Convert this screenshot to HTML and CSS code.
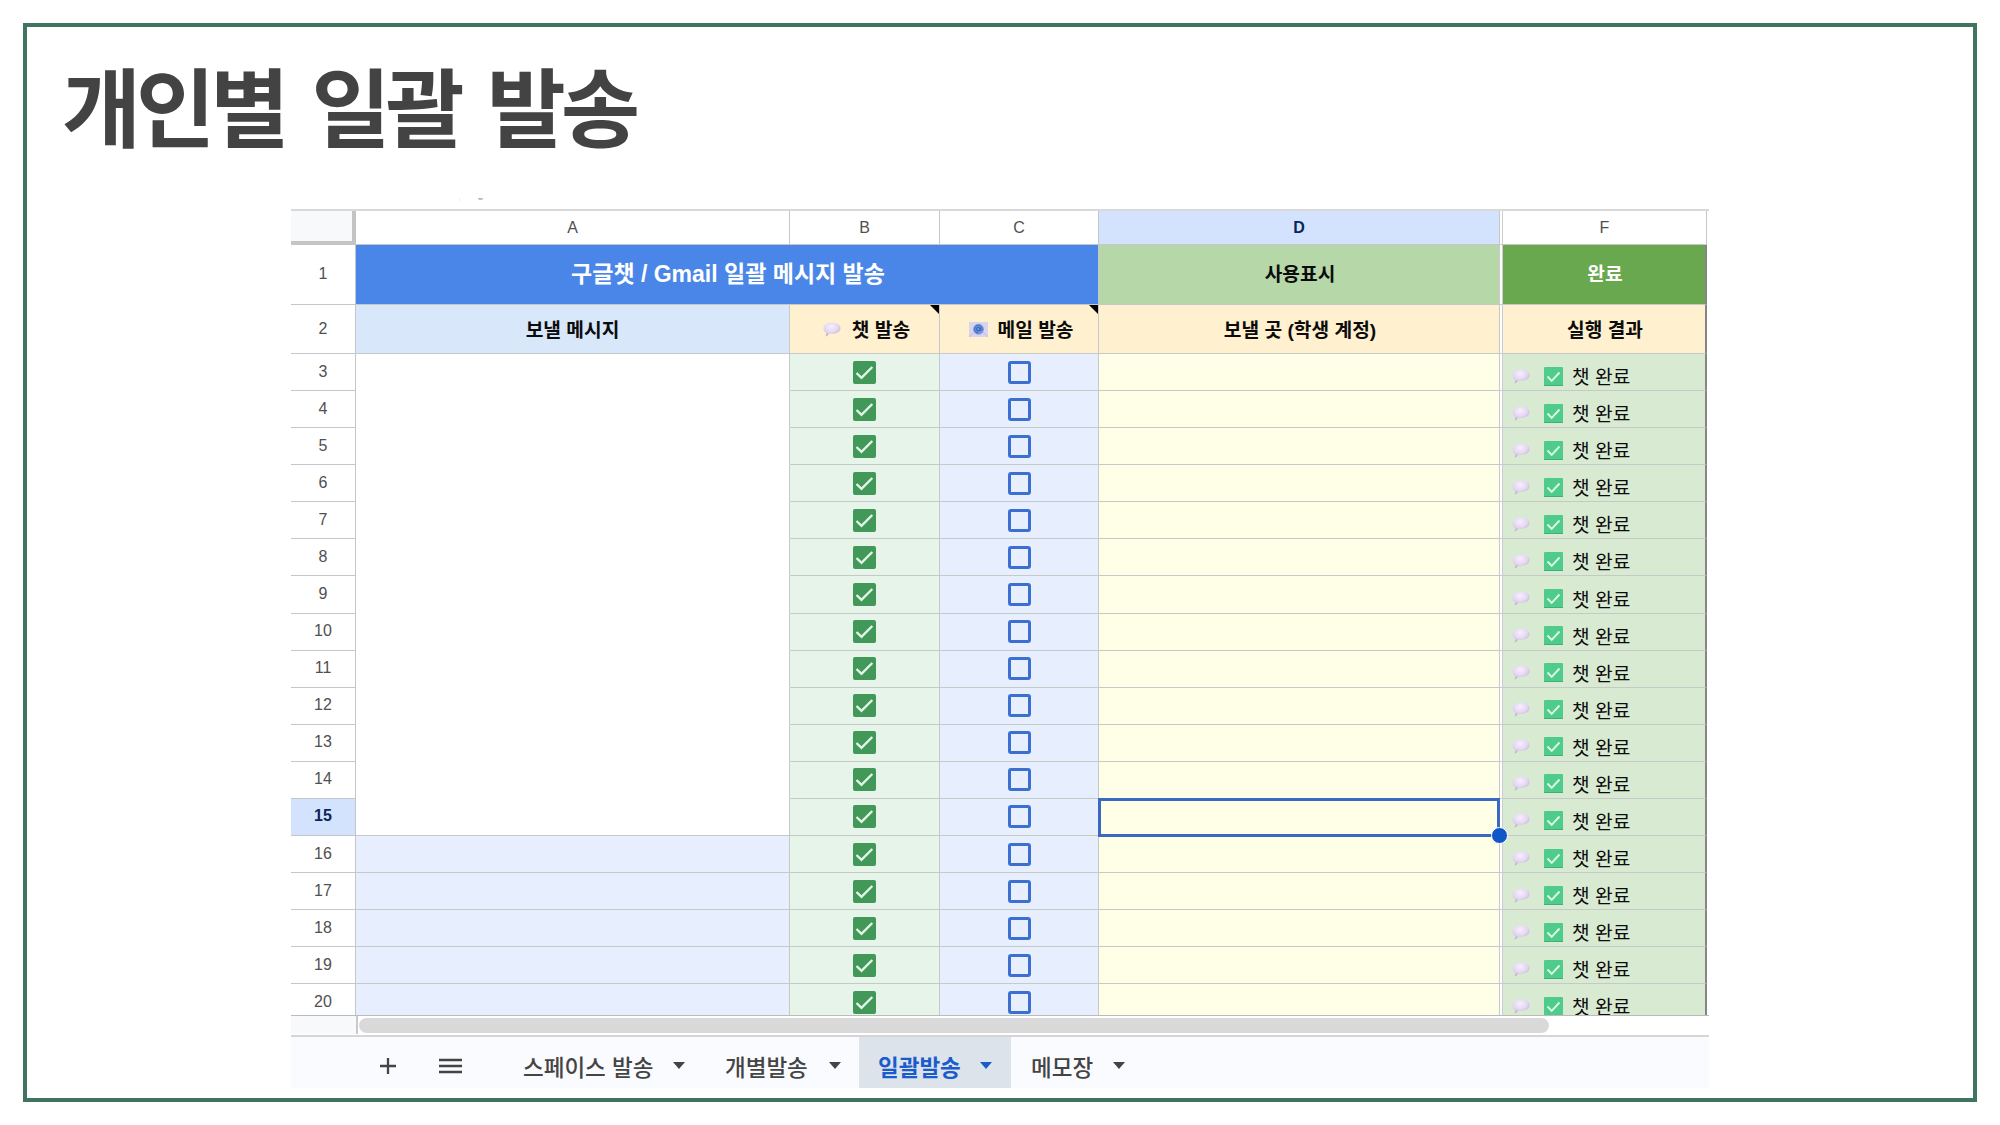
FILE: index.html
```html
<!DOCTYPE html>
<html lang="ko">
<head>
    <meta charset="UTF-8">
    <title>개인별 일괄 발송</title>
    <link rel="stylesheet" href="styles.css">
</head>
<body>
    <svg class="defs">
        <defs>
            <radialGradient id="bubble-fill" cx="45%" cy="30%" r="70%">
                <stop offset="0" stop-color="#f6effd"/>
                <stop offset=".6" stop-color="#e4d6f2"/>
                <stop offset="1" stop-color="#bda9cb"/>
            </radialGradient>
            <symbol id="bubble" viewBox="0 0 18 15">
                <path d="M9 .5C13.8.5 17.5 2.900 17.500 6.200S13.800 11.800 9 11.800c-.9 0-1.700-.1-2.500-.2C5.600 13 4.200 14.200 2.600 14.400c.6-.9.8-2.200.5-3.600C1.500 9.700.5 8.100.5 6.200.5 2.900 4.200.5 9 .5z" fill="url(#bubble-fill)"/>
            </symbol>
            <symbol id="mail" viewBox="0 0 19 15">
                <rect width="19" height="15" fill="#d9d3ee"/>
                <path d="M0 15l6-6M19 15l-6-6" stroke="#c3bbdd" fill="none"/>
                <circle cx="9.500" cy="7.200" r="5.400" fill="#6f9be0"/>
                <circle cx="9.300" cy="7.200" r="1.700" fill="none" stroke="#3a61b0" stroke-width="1.100"/>
                <path d="M11.200 5.200v2.600c0 1.400 1.900 1.200 1.900-.6 0-2.300-1.700-3.700-3.700-3.700-2.200 0-3.700 1.700-3.700 3.700s1.600 3.800 3.900 3.700" fill="none" stroke="#3a61b0" stroke-width=".9"/>
            </symbol>
            <symbol id="check" viewBox="0 0 23 23">
                <rect width="23" height="23" rx="2" fill="#419858"/>
                <path d="M3.500 12l5 4.800L19.300 6" fill="none" stroke="#e4f7e6" stroke-width="2.400"/>
            </symbol>
            <symbol id="done" viewBox="0 0 19 19">
                <rect width="19" height="19" rx="1" fill="#4fcb8b"/>
                <path d="M0 18.500h19" stroke="#3bb376"/>
                <path d="M3.500 9.500l4.200 4.300L15.500 5.500" fill="none" stroke="#dcf9e6" stroke-width="1.900"/>
            </symbol>
        </defs>
    </svg>
    <section class="slide">
        <h1>개인별 일괄 발송</h1>
        <div class="sheet">
            <div class="remnant"><i></i><i></i></div>
            <div class="grid" id="grid">
                <div class="corner"></div>
                <div class="col">A</div>
                <div class="col">B</div>
                <div class="col">C</div>
                <div class="col on">D</div>
                <div class="gap"></div>
                <div class="col">F</div>

                <div class="num">1</div>
                <div class="cell main-title">구글챗 / Gmail 일괄 메시지 발송</div>
                <div class="cell use">사용표시</div>
                <div class="gap"></div>
                <div class="cell finish edge">완료</div>

                <div class="num">2</div>
                <div class="cell message">보낼 메시지</div>
                <div class="cell head note"><svg class="bubble"><use href="#bubble"/></svg>챗 발송</div>
                <div class="cell head note"><svg class="mail"><use href="#mail"/></svg>메일 발송</div>
                <div class="cell head">보낼 곳 (학생 계정)</div>
                <div class="gap"></div>
                <div class="cell head edge">실행 결과</div>
            </div>
            <div class="scroll">
                <div class="scroll-left"></div>
                <div class="thumb"></div>
            </div>
            <div class="tabs">
                <svg class="plus" viewBox="0 0 16 16"><path d="M8 0v16M0 8h16"/></svg>
                <svg class="menu" viewBox="0 0 23 16"><path d="M0 2h23M0 8h23M0 14h23"/></svg>
                <div class="tab tab1">스페이스 발송<i></i></div>
                <div class="tab tab2">개별발송<i></i></div>
                <div class="tab tab3 active">일괄발송<i></i></div>
                <div class="tab tab4">메모장<i></i></div>
            </div>
        </div>
    </section>
    <script type="text/javascript">
    var grid = document.getElementById('grid');
    var html = '';
    for (var i = 3; i <= 20; i++) {
        var sel = i === 15;
        html += '<div class="num' + (sel ? ' on' : '') + '">' + i + '</div>';
        html += '<div class="cell ' + (i < 15 ? 'blank' : sel ? 'blank last' : 'blue') + '"></div>';
        html += '<div class="cell green"><svg class="check"><use href="#check"/></svg></div>';
        html += '<div class="cell blue"><span class="box"></span></div>';
        html += '<div class="cell yellow">' + (sel ? '<span class="select"></span>' : '') + '</div>';
        html += '<div class="gap"></div>';
        html += '<div class="cell result edge"><svg class="bubble"><use href="#bubble"/></svg><svg class="done"><use href="#done"/></svg>챗 완료</div>';
    }
    grid.innerHTML += html;
    </script>
</body>
</html>
```
FILE: styles.css
```css
*{padding: 0;margin: 0;box-sizing: border-box;}
body{width: 2000px;height: 1125px;padding: 23px;background: #fff;overflow: hidden;font-family: "Liberation Sans","Noto Sans CJK KR",sans-serif;}
.defs{display: block;width: 0;height: 0;}
.slide{width: 1954px;height: 1079px;border: 4px solid #3f745f;overflow: hidden;}
h1{height: 171px;padding: 17px 0 0 35px;font: 700 86px/120px "Noto Sans CJK KR",sans-serif;letter-spacing: -5px;word-spacing: 8px;color: #434343;white-space: nowrap;}
.sheet{width: 1418px;margin-left: 264px;}
.remnant{height: 11px;padding-left: 168px;display: flex;gap: 18px;}
.remnant i{width: 1px;height: 3px;background: #eee;}
.remnant i + i{width: 5px;height: 2px;background: #bbb;border-radius: 0 0 3px 3px;}

.grid{display: grid;grid-template-columns: 65px 434px 150px 159px 401px 3px 204px;grid-template-rows: 34px 60px 49px;grid-auto-rows: 37.08px;height: 807px;overflow: hidden;border-top: 2px solid #d9d9d9;border-bottom: 1px solid #bbb;}
.corner{background: #f8f9fa;border-right: 4px solid #c4c4c4;border-bottom: 4px solid #c4c4c4;}
.col,.num{display: flex;align-items: center;justify-content: center;font-size: 16px;color: #505050;border-right: 1px solid #c4c7c9;border-bottom: 1px solid #c4c7c9;}
.num{padding-bottom: 1px;}
.col.on,.num.on{background: #d3e3fd;color: #0b2559;font-weight: 700;}
.gap{border-right: 1px solid #ccc;border-bottom: 1px solid #ccc;background: #fff;}
.cell{position: relative;display: flex;align-items: center;justify-content: center;font-size: 19.2px;font-weight: 700;color: #0c0c0c;white-space: nowrap;border-right: 1px solid #c5c9c8;border-bottom: 1px solid #c5c9c8;}
.main-title{grid-column: 2 / 5;padding: 0 0 5px 2px;background: #4a86e8;color: #fff;font-size: 23px;}
.use{padding: 0 0 3px 2px;background: #b6d7a8;}
.finish{padding: 0 0 3px 2px;background: #6aa84f;color: #fff;}
.message{background: #d8e7fa;}
.head{padding-left: 2px;background: #fff0cf;}
.green{background: #e6f4ea;}
.blue{background: #e7eefd;}
.yellow{background: #fffee6;}
.blank{background: #fff;border-bottom-color: #fff;}
.blank.last{border-bottom-color: #c5c9c8;}
.edge{border-right: 2px solid #858585;}
.note{padding-left: 4px;}
.note::after{content: "";position: absolute;right: 0;top: 0;border-top: 9px solid #000;border-left: 9px solid transparent;}
.result{background: #d9ead3;font-weight: 400;justify-content: flex-start;padding: 8px 0 0 9px;}
.bubble{width: 18px;height: 15px;margin-right: 11px;}
.mail{width: 19px;height: 15px;margin-right: 10px;}
.result .bubble{margin-right: 14px;}
.done{width: 19px;height: 19px;margin-right: 9px;}
.check{width: 23px;height: 23px;}
.box{width: 23px;height: 23px;border: 3px solid #3b70d2;border-radius: 3px;}
.select{position: absolute;left: -1px;top: -1px;right: -1px;bottom: -2px;border: 3px solid #3a69c4;z-index: 1;}
.select::after{content: "";position: absolute;right: -11px;bottom: -10px;width: 15px;height: 15px;border: 1.5px solid #fff;border-radius: 50%;background: #0f56c9;}

.scroll{display: flex;height: 21px;border-bottom: 2px solid #d5d5d5;}
.scroll-left{width: 67px;height: 18px;background: #f8f9fa;border-right: 2px solid #c9c9c9;}
.thumb{width: 1190px;height: 15px;margin: 2px 0 0 1px;border-radius: 8px;background: #d9d9d9;}
.tabs{display: flex;align-items: center;height: 51px;background: #f9fbfe;}
.plus{width: 16px;height: 16px;margin: 6px 43px 0 89px;}
.menu{width: 23px;height: 16px;margin: 6px 47px 0 0;}
.plus path,.menu path{fill: none;stroke: #444;stroke-width: 2.3;}
.tab{display: flex;align-items: center;height: 51px;padding: 6px 20px 0 14px;font-size: 22.5px;font-weight: 500;color: #444;white-space: nowrap;}
.tab i{margin-left: auto;border: 6px solid transparent;border-top: 7px solid #444;border-bottom: 0;}
.tab1{width: 196px;}
.tab2{width: 154px;padding: 6px 18px 0 20px;}
.tab3{width: 152px;padding: 6px 19px 0;}
.tab4{width: 134px;padding: 6px 20px 0;}
.active{background: #dde3ea;color: #1a5ccc;font-weight: 700;}
.active i{border-top-color: #1a5ccc;}
```
